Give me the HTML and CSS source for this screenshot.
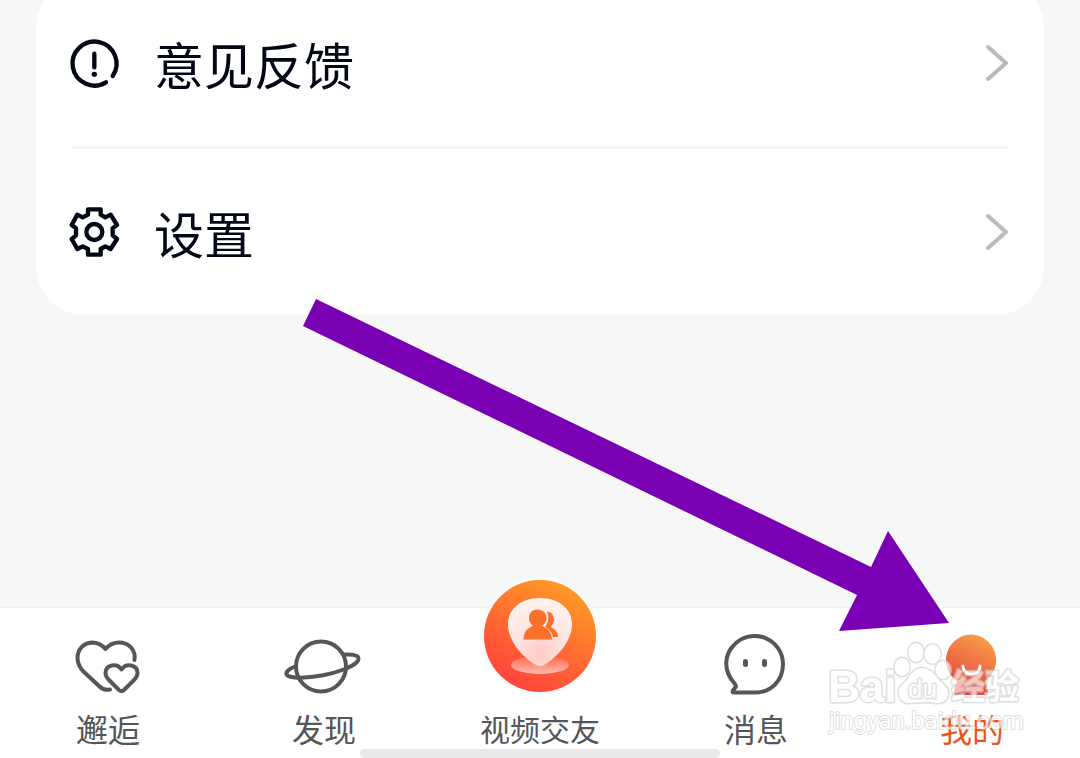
FILE: index.html
```html
<!DOCTYPE html>
<html lang="zh-CN">
<head>
<meta charset="utf-8">
<meta name="viewport" content="width=device-width, initial-scale=1">
<title>我的</title>
<link rel="stylesheet" href="styles.css">
</head>
<body>
<div class="screen">
  <main class="content">
    <div class="card">
      <button class="row" type="button">
        <svg class="row-icon" viewBox="36 22 150 150" aria-hidden="true">
          <path d="M138 155A66 66 0 1 1 158 136"/>
          <path d="M103 69V110"/>
          <circle class="dot" cx="103" cy="131" r="8"/>
        </svg>
        <span class="row-label">意见反馈</span>
        <svg class="chevron" viewBox="0 0 24 40" aria-hidden="true"><path d="M4 4L22 20L4 36"/></svg>
      </button>
      <hr class="divider">
      <button class="row" type="button">
        <svg class="row-icon" viewBox="36 34 150 150" aria-hidden="true">
          <path d="M84 41H122V57L136 65L152 57L171 88L158 98V119L171 130L152 160L136 152L122 160V177H84V160L68 152L52 160L35 130L48 119V98L35 88L52 57L68 65L84 57Z"/>
          <circle cx="103" cy="109" r="24"/>
        </svg>
        <span class="row-label">设置</span>
        <svg class="chevron" viewBox="0 0 24 40" aria-hidden="true"><path d="M4 4L22 20L4 36"/></svg>
      </button>
    </div>
  </main>

  <nav class="tabs">
    <button class="tab" type="button">
      <svg class="tab-icon" viewBox="70 626 76 76" aria-hidden="true">
        <path d="M134.500 660C136 650 129 642.500 119 642.500C113 642.500 109 645 105.500 649C102 645 97 642.500 92 642.500C83 643 77.500 650 77.500 658C77.500 664 80 668 84 672L99 686C103 690 106 690.500 110 689.500"/>
        <path d="M121.500 669.500C117 662.500 105.500 664.500 105.500 673C105.500 676 107 678 109 680L119 690Q121.500 692 124 690L134 680C136 678 137.500 676 137.500 673C137.500 664.500 126 662.500 121.500 669.500Z"/>
      </svg>
      <span class="tab-label">邂逅</span>
    </button>
    <button class="tab" type="button">
      <svg class="tab-icon" viewBox="286 626 76 76" aria-hidden="true">
        <circle cx="321" cy="666.500" r="25"/>
        <path d="M296 666C288 669 285 673 287 675C291 679 308 678 322 675.500C338 672.500 352 667 357 662C361 657 357 654 345 654.500"/>
      </svg>
      <span class="tab-label">发现</span>
    </button>
    <button class="tab" type="button">
      <svg class="video-icon" viewBox="480 576 120 120" aria-hidden="true">
        <defs>
          <linearGradient id="video-bg" x1="0.750" y1="0.050" x2="0.250" y2="0.950">
            <stop offset="0" stop-color="#ff9a25"/><stop offset="0.500" stop-color="#ff6c32"/><stop offset="1" stop-color="#ff433b"/>
          </linearGradient>
          <radialGradient id="pin-bg" cx="0.500" cy="0.800" r="0.800">
            <stop offset="0" stop-color="#ffc9c4"/><stop offset="0.500" stop-color="#ffe5e1"/><stop offset="1" stop-color="#fff2ef"/>
          </radialGradient>
          <linearGradient id="base-bg" x1="0" y1="0" x2="0" y2="1">
            <stop offset="0" stop-color="#ff6949"/><stop offset="1" stop-color="#ffbbb2"/>
          </linearGradient>
        </defs>
        <circle cx="540" cy="636" r="59" fill="#fcfcfc"/>
        <circle cx="540" cy="636" r="56" fill="url(#video-bg)"/>
        <ellipse cx="540" cy="665" rx="29" ry="9" fill="url(#base-bg)"/>
        <path d="M540 598C521 598 508 609 508 624C508 642 524 658 536 665Q540 667.500 544 665C556 658 572 642 572 624C572 609 559 598 540 598Z" fill="url(#pin-bg)"/>
        <path d="M547 612C551 611 554 616 554 620C554 623 552 625 550.500 627C555 629 558 632 558 637H553C552 632 549 629 545 627C549 622 549 616 547 612Z" fill="#fb702d"/>
        <path d="M537.500 609.500C532 609.500 529 613.500 529 618C529 622 531 624 533 626C527 628 524 632 523.500 639.500H552C551.500 632 548 628 542 626C545 624 546.500 621 546.500 618C546.500 613.500 543 609.500 537.500 609.500Z" fill="#fb702d"/>
      </svg>
      <span class="tab-label tab-label-small">视频交友</span>
    </button>
    <button class="tab" type="button">
      <svg class="tab-icon" viewBox="718 626 76 76" aria-hidden="true">
        <path d="M755 692.500H733.500Q732 692.500 733 690.500L736 686.500L735 684C722 670 725 654 734 645A28.250 28.250 0 0 1 783 664C783 681 771 692.500 755 692.500Z"/>
        <path class="eye" d="M745.500 661.500V664.500M764.500 661.500V664.500"/>
      </svg>
      <span class="tab-label">消息</span>
    </button>
    <button class="tab tab-active" type="button" aria-current="page">
      <svg class="tab-icon" viewBox="934 626 76 76" aria-hidden="true">
        <defs>
          <linearGradient id="mine-bg" x1="0.700" y1="0" x2="0.300" y2="1">
            <stop offset="0" stop-color="#f6a045"/><stop offset="0.550" stop-color="#ee6945"/><stop offset="1" stop-color="#e33c34"/>
          </linearGradient>
        </defs>
        <path class="figure" d="M971 634.500A25.500 25.500 0 0 1 985 681L988 691Q989 695 985 695H957Q953 695 954 691L957 681A25.500 25.500 0 0 1 971 634.500Z" fill="url(#mine-bg)"/>
        <path class="smile" d="M963 666C963 677 980 677 980 666"/>
      </svg>
      <span class="tab-label">我的</span>
    </button>
    <div class="home-indicator"></div>
  </nav>

  <svg class="annotation" viewBox="0 0 1080 758" aria-hidden="true">
    <path class="arrow" d="M316 299L871 567L888 531L949 623L839 631L857 595L303 326Z"/>
    <g class="watermark">
      <g class="paw">
        <ellipse cx="902" cy="667" rx="7.500" ry="9"/>
        <ellipse cx="916" cy="652.500" rx="7.500" ry="9.500"/>
        <ellipse cx="932.500" cy="654" rx="8" ry="9.500"/>
        <ellipse cx="943" cy="670" rx="7.500" ry="9"/>
        <path d="M922 668C912 668 910 678 903 684C896 690 898 702 908 703C917 703 925 701 936 703C948 704 952 692 944 685C936 678 932 668 922 668Z"/>
      </g>
      <text class="mark-name" x="828" y="702">Bai</text>
      <text class="mark-du" x="908" y="698">du</text>
      <text class="mark-cn" x="951" y="699">经验</text>
      <text class="mark-url" x="829" y="729">jingyan.baidu.com</text>
    </g>
  </svg>
</div>
</body>
</html>
```
FILE: styles.css
```css
* {
  box-sizing: border-box;
}

body {
  margin: 0;
  background: #f7f7f7;
  font-family: "Noto Sans CJK SC", "Noto Sans", sans-serif;
}

button {
  border: 0;
  padding: 0;
  background: none;
  color: inherit;
  font: inherit;
}

.screen {
  position: relative;
  display: flex;
  flex-direction: column;
  min-height: 100vh;
  overflow: hidden;
}

.content {
  flex: 1;
  padding: 0 36px;
}

.card {
  margin-top: -20px;
  padding: 0 36px;
  border-radius: 48px;
  background: #fff;
}

.row {
  display: flex;
  align-items: center;
  gap: 32px;
  width: 100%;
  height: 166px;
  color: #030817;
  text-align: left;
}

.row-icon {
  width: 50px;
  height: 50px;
  overflow: visible;
  fill: none;
  stroke: currentColor;
  stroke-width: 13;
  stroke-linecap: round;
  stroke-linejoin: round;
}

.row-icon .dot {
  fill: currentColor;
  stroke: none;
}

.row-label {
  flex: 1;
  font-size: 50px;
  line-height: 64px;
}

.chevron {
  width: 24px;
  height: 40px;
  fill: none;
  stroke: #bababa;
  stroke-width: 4;
  stroke-linecap: round;
  stroke-linejoin: round;
}

.divider {
  height: 3px;
  margin: 0;
  border: 0;
  background: #f5f5f5;
}

.tabs {
  position: relative;
  display: grid;
  grid-template-columns: repeat(5, 1fr);
  grid-template-rows: 150px;
  border-top: 1px solid #efefef;
  background: #fff;
}

.tab {
  display: flex;
  flex-direction: column;
  align-items: center;
  justify-content: flex-end;
  gap: 6px;
  min-height: 0;
  padding-bottom: 10px;
  color: #55565a;
}

.tab-icon {
  width: 76px;
  height: 76px;
  flex: none;
  overflow: visible;
  fill: none;
  stroke: currentColor;
  stroke-width: 4;
  stroke-linecap: round;
  stroke-linejoin: round;
}

.tab-icon .eye {
  stroke-width: 5;
}

.tab-icon .figure {
  stroke: none;
}

.tab-icon .smile {
  stroke: #fff;
  stroke-width: 3;
}

.video-icon {
  width: 120px;
  height: 120px;
  flex: none;
}

.video-icon + .tab-label {
  margin-top: 6px;
}

.tab-label {
  font-size: 32px;
  line-height: 40px;
}

.tab-label-small {
  font-size: 30px;
}

.tab-active .tab-label {
  color: #e8561e;
}

.home-indicator {
  position: absolute;
  bottom: 0;
  left: 50%;
  width: 360px;
  height: 9px;
  margin-left: -180px;
  border-radius: 5px;
  background: #e8e8e8;
}

.annotation {
  position: absolute;
  bottom: 0;
  left: 0;
  width: 100%;
  pointer-events: none;
}

.arrow {
  fill: #7900b3;
}

.watermark {
  fill: #fff;
  stroke: #cfcfcf;
  stroke-width: 3;
  stroke-linejoin: round;
  paint-order: stroke;
  opacity: 0.65;
  font-family: "Liberation Sans", "Noto Sans CJK SC", sans-serif;
}

.mark-name {
  font-size: 44px;
  font-weight: bold;
}

.mark-du {
  font-size: 26px;
}

.mark-cn {
  font-size: 34px;
  font-weight: bold;
}

.mark-url {
  stroke-width: 2;
  font-family: Roboto, sans-serif;
  font-size: 24px;
}
```
